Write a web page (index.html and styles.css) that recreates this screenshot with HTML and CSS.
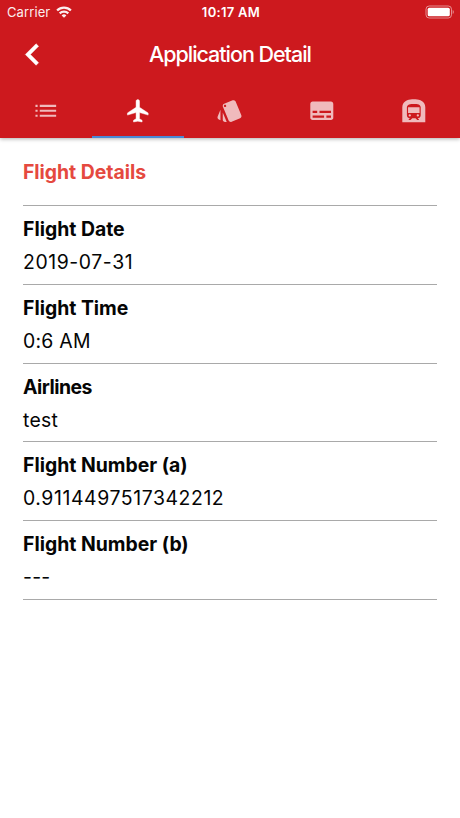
FILE: index.html
```html
<!DOCTYPE html>
<html lang="en">
<head>
<meta charset="utf-8">
<title>Application Detail</title>
<link rel="stylesheet" href="styles.css">
</head>
<body>
<header class="header">
  <div class="status">
    <div class="carrier"><span>Carrier</span>
      <svg class="wifi" viewBox="0 0 16 12"><g fill="none" stroke="#fff" stroke-width="2.3"><path d="M1.1 4.5a9.8 9.8 0 0 1 13.8 0"/><path d="M3.7 7.4a6.1 6.1 0 0 1 8.6 0"/></g><path fill="#fff" d="M8 11.8 5.6 9.4a3.4 3.4 0 0 1 4.8 0z"/></svg>
    </div>
    <div class="clock">10:17 AM</div>
    <svg class="battery" viewBox="0 0 30 14"><rect x="1" y="1" width="25.5" height="12" rx="3.2" fill="none" stroke="#fff" stroke-opacity=".5"/><rect x="2.7" y="2.7" width="22.1" height="8.6" rx="1.6" fill="#fff"/><path d="M27.7 5v4c1.5-.6 1.5-3.4 0-4z" fill="#fff" fill-opacity=".5"/></svg>
  </div>
  <div class="navbar">
    <svg class="back" viewBox="0 0 24 24"><path d="M15.41 16.58 10.83 12l4.58-4.59L14 6l-6 6 6 6z"/></svg>
    <h1 class="title">Application Detail</h1>
  </div>
  <nav class="tabs">
    <a class="tab"><svg viewBox="0 0 512 512"><path d="M64 144h40v40H64zM64 236h40v40H64zM64 328h40v40H64zM144 144h304v40H144zM144 236h304v40H144zM144 328h304v40H144z"/></svg></a>
    <a class="tab active"><svg viewBox="0 0 512 512"><path d="M448 336v-40L288 192V79.2c0-17.7-14.8-31.2-32-31.2s-32 13.5-32 31.2V192L64 296v40l160-48v113.6l-48 31.2V464l80-16 80 16v-31.2l-48-31.2V288l160 48z"/></svg></a>
    <a class="tab"><svg viewBox="0 0 24 24"><path d="M2.53 19.65l1.34.56v-9.03l-2.43 5.86c-.41 1.02.08 2.19 1.09 2.61zm19.5-3.7L17.07 3.98c-.31-.75-1.04-1.21-1.81-1.23-.26 0-.53.04-.79.15L7.1 5.95c-.75.31-1.21 1.03-1.23 1.8-.01.27.04.54.15.8l4.96 11.97c.31.76 1.05 1.22 1.83 1.23.26 0 .52-.05.77-.15l7.36-3.05c1.02-.42 1.51-1.59 1.09-2.6zM7.88 8.75c-.55 0-1-.45-1-1s.45-1 1-1 1 .45 1 1-.45 1-1 1zm-2 11c0 1.1.9 2 2 2h1.45l-3.45-8.34v6.34z"/></svg></a>
    <a class="tab"><svg viewBox="0 0 24 24"><path d="M20 4H4c-1.1 0-2 .9-2 2v12c0 1.1.9 2 2 2h16c1.1 0 2-.9 2-2V6c0-1.1-.9-2-2-2zM4 12h4v2H4v-2zm10 6H4v-2h10v2zm6 0h-4v-2h4v2zm0-4H10v-2h10v2z"/></svg></a>
    <a class="tab"><svg viewBox="0 0 24 24"><circle cx="15.5" cy="16" r="1"/><circle cx="8.5" cy="16" r="1"/><path d="M7.01 9h10v5h-10zM17.8 2.8C16 2.09 13.86 2 12 2s-4 .09-5.8.8C3.53 3.84 2 6.05 2 8.86V22h20V8.86c0-2.81-1.53-5.02-4.2-6.06zm.2 13.08c0 1.45-1.18 2.62-2.63 2.62l1.13 1.12V20H15l-1.5-1.5h-2.83L9.17 20H7.5v-.38l1.12-1.12C7.18 18.5 6 17.32 6 15.88V9c0-2.63 3-3 6-3 3.32 0 6 .38 6 3v6.88z"/></svg></a>
  </nav>
</header>
<main class="content">
  <h2 class="heading">Flight Details</h2>
  <dl class="list">
    <div class="row"><dt>Flight Date</dt><dd class="number">2019-07-31</dd></div>
    <div class="row"><dt>Flight Time</dt><dd>0:6 AM</dd></div>
    <div class="row"><dt class="tight">Airlines</dt><dd>test</dd></div>
    <div class="row"><dt>Flight Number (a)</dt><dd class="number">0.9114497517342212</dd></div>
    <div class="row"><dt>Flight Number (b)</dt><dd>---</dd></div>
  </dl>
</main>
</body>
</html>
```
FILE: styles.css
```css
* { box-sizing: border-box; }
body {
  margin: 0;
  min-height: 818px;
  background: #fff;
  color: #050505;
  font-family: Inter, "Liberation Sans", sans-serif;
  font-size: 19.4px;
}
.header {
  height: 138px;
  background: #cd191e;
  color: #fff;
  box-shadow: 0 1px 4px rgba(0, 0, 0, .32);
}
.status {
  display: grid;
  grid-template-columns: 1fr auto 1fr;
  align-items: center;
  height: 24px;
  padding: 0 5px 0 7px;
  font-size: 13px;
}
.carrier { display: flex; align-items: center; gap: 6px; letter-spacing: .1px; opacity: .93; }
.wifi { width: 16px; height: 12px; }
.clock { font-weight: 600; font-size: 13px; letter-spacing: .3px; }
.battery { width: 30px; height: 14px; justify-self: end; }
.navbar {
  display: grid;
  grid-template-columns: 64px 1fr 64px;
  align-items: center;
  height: 60px;
}
.back { width: 43px; height: 43px; margin-left: 10.5px; fill: #fff; stroke: #fff; stroke-width: .25; }
.title {
  margin: 0;
  text-align: center;
  font-size: 21.5px;
  font-weight: 500;
  letter-spacing: -1.03px;
  white-space: nowrap;
}
.tabs { display: grid; grid-template-columns: repeat(5, 1fr); height: 54px; }
.tab {
  display: flex;
  justify-content: center;
  align-items: center;
  padding-top: 1px;
  border-bottom: 2px solid transparent;
}
.tab svg { width: 27.6px; height: 27.6px; fill: #fff; opacity: .7; }
.tab.active { border-color: #4a88d4; }
.tab.active svg { opacity: 1; stroke: #fff; stroke-width: 8; }
.content { padding: 0 23px; }
.heading {
  margin: 0;
  height: 67px;
  line-height: 68px;
  font-size: 19.4px;
  font-weight: 700;
  letter-spacing: -.02px;
  color: #e5493f;
}
.list { margin: 0; border-top: 1px solid #a9a9a9; }
.row {
  height: 78.8px;
  padding-top: 6px;
  border-bottom: 1px solid #a9a9a9;
}
dt { font-weight: 700; line-height: 34px; letter-spacing: 0; }
.tight { letter-spacing: -.5px; }
dd { margin: 0; line-height: 33.4px; letter-spacing: .25px; }
.number { letter-spacing: .59px; }
```
